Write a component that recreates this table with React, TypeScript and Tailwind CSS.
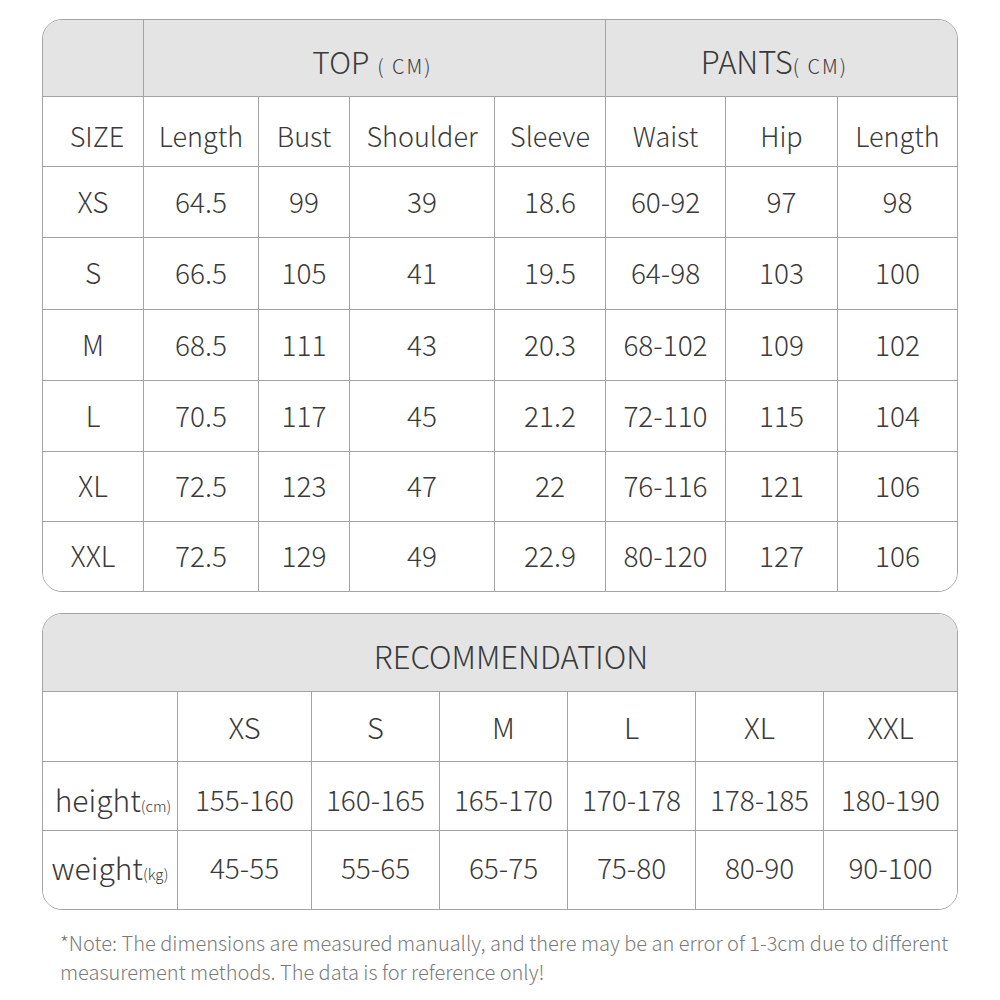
import React from 'react';

const font = { fontFamily: '"Noto Sans CJK SC", "Noto Sans", sans-serif' };

type CellProps = {
  children?: React.ReactNode;
  right?: boolean;
  bottom?: boolean;
  grey?: boolean;
  className?: string;
};

const Cell = ({ children, right = true, bottom = true, grey = false, className = '' }: CellProps) => (
  <div
    className={
      'flex items-center justify-center border-[#a3a3a3] ' +
      (right ? 'border-r ' : '') +
      (bottom ? 'border-b ' : '') +
      (grey ? 'bg-[#e5e4e5] ' : 'bg-white ') +
      className
    }
  >
    <span className="whitespace-nowrap">{children}</span>
  </div>
);

const topCols = ['SIZE', 'Length', 'Bust', 'Shoulder', 'Sleeve', 'Waist', 'Hip', 'Length'];

const sizeRows = [
  ['XS', '64.5', '99', '39', '18.6', '60-92', '97', '98'],
  ['S', '66.5', '105', '41', '19.5', '64-98', '103', '100'],
  ['M', '68.5', '111', '43', '20.3', '68-102', '109', '102'],
  ['L', '70.5', '117', '45', '21.2', '72-110', '115', '104'],
  ['XL', '72.5', '123', '47', '22', '76-116', '121', '106'],
  ['XXL', '72.5', '129', '49', '22.9', '80-120', '127', '106'],
];

const recSizes = ['XS', 'S', 'M', 'L', 'XL', 'XXL'];
const heights = ['155-160', '160-165', '165-170', '170-178', '178-185', '180-190'];
const weights = ['45-55', '55-65', '65-75', '75-80', '80-90', '90-100'];

const SizeTable = () => (
  <div className="w-[916px] rounded-[20px] border border-[#a3a3a3] overflow-hidden">
    <div className="grid grid-cols-[101px_115px_91px_145px_111px_120px_112px_119px] grid-rows-[77px_70px_71px_72px_71px_71px_70px_69px]">
      <Cell grey />
      <Cell grey className="col-span-4 text-[30px] pt-[6px] pr-[4px]">
        TOP<span className="ml-[8px] text-[20px] tracking-[2px]">( CM)</span>
      </Cell>
      <Cell grey right={false} className="col-span-3 text-[31px] pt-[6px] pr-[14px]">
        PANTS<span className="text-[20px] tracking-[2px]">( CM)</span>
      </Cell>
      {topCols.map((c, i) => (
        <Cell key={'h' + i} right={i < 7} className={'text-[27px] pt-[10px]' + (i === 0 ? ' pl-[8px]' : '')}>
          {c}
        </Cell>
      ))}
      {sizeRows.map((row, r) =>
        row.map((v, i) => (
          <Cell key={r + '-' + i} right={i < 7} bottom={r < sizeRows.length - 1} className="text-[28px] pb-[3px]">
            {v}
          </Cell>
        ))
      )}
    </div>
  </div>
);

const RecTable = () => (
  <div className="w-[916px] rounded-[20px] border border-[#a3a3a3] overflow-hidden">
    <div className="grid grid-cols-[135px_134px_128px_128px_128px_128px_133px] grid-rows-[78px_70px_69px_78px]">
      <Cell grey right={false} className="col-span-7 text-[31px] pt-[8px] pl-[22px]">
        RECOMMENDATION
      </Cell>
      <Cell />
      {recSizes.map((s, i) => (
        <Cell key={'s' + i} right={i < 5} className="text-[29px]">
          {s}
        </Cell>
      ))}
      <Cell className="text-[30px] pt-[6px] pl-[6px]">
        height<span className="text-[15px]">(cm)</span>
      </Cell>
      {heights.map((h, i) => (
        <Cell key={'hh' + i} right={i < 5} className="text-[28px] pt-[6px]">
          {h}
        </Cell>
      ))}
      <Cell bottom={false} className="text-[30px] pb-[6px]">
        weight<span className="text-[15px]">(kg)</span>
      </Cell>
      {weights.map((w, i) => (
        <Cell key={'w' + i} right={i < 5} bottom={false} className="text-[28px] pb-[6px]">
          {w}
        </Cell>
      ))}
    </div>
  </div>
);

const App = () => {
  return (
    <div className="w-[1000px] h-[1000px] bg-white pt-[19px] pl-[42px] text-[#3a3a3a] font-light" style={font}>
      <SizeTable />
      <div className="h-[21px]" />
      <RecTable />
      <p className="mt-[18px] ml-[18px] w-[910px] text-[20px] leading-[29px] text-[#7a7a7a]">
        *Note: The dimensions are measured manually, and there may be an error of 1-3cm due to different
        measurement methods. The data is for reference only!
      </p>
    </div>
  );
};

export default App;
